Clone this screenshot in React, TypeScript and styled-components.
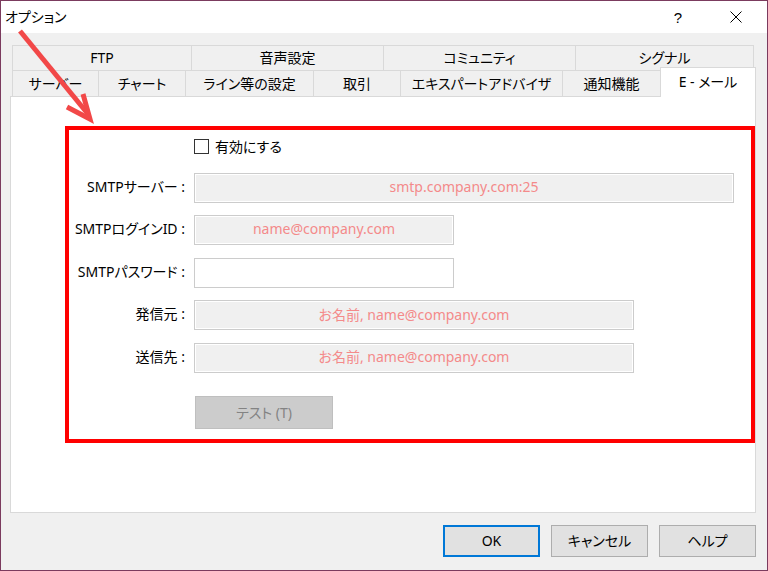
import React from "react";
import styled, { createGlobalStyle } from "styled-components";

const FONT = `"Noto Sans", "Noto Sans CJK JP", sans-serif`;

const GlobalStyle = createGlobalStyle`
  html, body { margin: 0; padding: 0; background: #ffffff; }
  * { box-sizing: border-box; }
`;

const Window = styled.div`
  position: relative;
  width: 768px;
  height: 571px;
  border: 1px solid #7b3b5e;
  background: #f0f0f0;
  display: flex;
  flex-direction: column;
  font-family: ${FONT};
  font-feature-settings: "palt";
  font-size: 14px;
  color: #000;
  overflow: hidden;
`;

const TitleBar = styled.div`
  height: 32px;
  background: #ffffff;
  display: flex;
  align-items: center;
  padding-left: 4px;
`;

const TitleText = styled.div`
  flex: 1;
  font-size: 14px;
  line-height: 1;
`;

const TitleControls = styled.div`
  display: flex;
  align-items: center;
  gap: 12px;
  padding-right: 8px;
`;

const TitleButton = styled.div`
  width: 46px;
  height: 32px;
  display: flex;
  align-items: center;
  justify-content: center;
  font-size: 15px;
  font-family: "Liberation Sans", sans-serif;
`;

const Body = styled.div`
  flex: 1;
  display: flex;
  flex-direction: column;
  padding: 12px 11px 0 9px;
`;

const TabStrip = styled.div`
  display: flex;
  flex-direction: column;
  margin-left: 2px;
`;

const TabRow = styled.div<{ $h: number }>`
  display: flex;
  height: ${(p) => p.$h}px;
`;

const Tab = styled.div<{ $w: number; $last?: boolean; $active?: boolean }>`
  width: ${(p) => p.$w}px;
  display: flex;
  align-items: center;
  justify-content: center;
  padding-bottom: 2px;
  border-top: 1px solid #d9d9d9;
  border-left: 1px solid #d9d9d9;
  border-right: ${(p) => (p.$last || p.$active ? "1px solid #d9d9d9" : "none")};
  background: ${(p) => (p.$active ? "#ffffff" : "#f0f0f0")};
  white-space: nowrap;
  ${(p) =>
    p.$active
      ? `
    align-self: flex-start;
    height: 30px;
    margin-top: -3px;
    position: relative;
    z-index: 1;
    padding-bottom: 3px;
  `
      : ""}
`;

const Panel = styled.div`
  height: 417px;
  border: 1px solid #d9d9d9;
  background: #ffffff;
  padding: 29px 0 0 54px;
`;

const Highlight = styled.div`
  height: 317px;
  border: 4px solid #ff0000;
  padding-top: 9px;
`;

const Form = styled.div`
  display: grid;
  grid-template-columns: 125px 1fr;
  row-gap: 12.5px;
  align-items: center;
`;

const Label = styled.div`
  text-align: right;
  padding-right: 9px;
  padding-bottom: 2px;
  white-space: nowrap;
  line-height: 1;
`;

const CheckRow = styled.label`
  grid-column: 2;
  display: flex;
  align-items: center;
  gap: 6px;
  height: 15px;
  margin-bottom: 6px;
  line-height: 1;
`;

const CheckBox = styled.span`
  width: 15px;
  height: 15px;
  border: 1px solid #333333;
  background: #ffffff;
`;

const Field = styled.div<{ $w: number; $disabled?: boolean }>`
  width: ${(p) => p.$w}px;
  height: 30px;
  border: 1px solid #cccccc;
  box-shadow: inset 0 0 0 1px #ffffff;
  background: ${(p) => (p.$disabled ? "#f0f0f0" : "#ffffff")};
  color: #f48a8a;
  display: flex;
  align-items: center;
  justify-content: center;
  padding-bottom: 3px;
  font-size: 14px;
  white-space: nowrap;
`;

const TestButton = styled.div`
  grid-column: 2;
  margin-top: 11px;
  margin-left: 1px;
  width: 138px;
  height: 33px;
  background: #cccccc;
  border: 1px solid #bfbfbf;
  color: #838383;
  display: flex;
  align-items: center;
  justify-content: center;
  padding-bottom: 2px;
`;

const ButtonRow = styled.div`
  display: flex;
  justify-content: flex-end;
  gap: 11px;
  margin-top: 12px;
`;

const DialogButton = styled.div<{ $default?: boolean }>`
  width: 97px;
  height: 32px;
  background: #e1e1e1;
  border: ${(p) => (p.$default ? "2px solid #0078d7" : "1px solid #adadad")};
  display: flex;
  align-items: center;
  justify-content: center;
  padding-bottom: 2px;
`;

const ArrowLayer = styled.svg`
  position: absolute;
  left: 0;
  top: 0;
  pointer-events: none;
`;

const row1 = [
  { t: "FTP", w: 179 },
  { t: "音声設定", w: 192 },
  { t: "コミュニティ", w: 192 },
  { t: "シグナル", w: 179 },
];

const row2 = [
  { t: "サーバー", w: 86 },
  { t: "チャート", w: 87 },
  { t: "ライン等の設定", w: 128 },
  { t: "取引", w: 87 },
  { t: "エキスパートアドバイザ", w: 162 },
  { t: "通知機能", w: 98 },
];

export default function App() {
  return (
    <>
      <GlobalStyle />
      <Window>
        <TitleBar>
          <TitleText>オプション</TitleText>
          <TitleControls>
            <TitleButton>?</TitleButton>
            <TitleButton>
              <svg width="12" height="12" viewBox="0 0 12 12">
                <path d="M0.5 0.5 L11.5 11.5 M11.5 0.5 L0.5 11.5" stroke="#000" strokeWidth="1" />
              </svg>
            </TitleButton>
          </TitleControls>
        </TitleBar>
        <Body>
          <TabStrip>
            <TabRow $h={25}>
              {row1.map((t, i) => (
                <Tab key={t.t} $w={t.w} $last={i === row1.length - 1}>
                  {t.t}
                </Tab>
              ))}
            </TabRow>
            <TabRow $h={26}>
              {row2.map((t) => (
                <Tab key={t.t} $w={t.w}>
                  {t.t}
                </Tab>
              ))}
              <Tab $w={96} $active>
                E - メール
              </Tab>
            </TabRow>
          </TabStrip>
          <Panel>
            <Highlight>
              <Form>
                <CheckRow>
                  <CheckBox />
                  有効にする
                </CheckRow>
                <Label>SMTPサーバー :</Label>
                <Field $w={540} $disabled>smtp.company.com:25</Field>
                <Label>SMTPログインID :</Label>
                <Field $w={260} $disabled>name@company.com</Field>
                <Label>SMTPパスワード :</Label>
                <Field $w={260} />
                <Label>発信元 :</Label>
                <Field $w={440} $disabled>お名前, name@company.com</Field>
                <Label>送信先 :</Label>
                <Field $w={440} $disabled>お名前, name@company.com</Field>
                <TestButton>テスト (T)</TestButton>
              </Form>
            </Highlight>
          </Panel>
          <ButtonRow>
            <DialogButton $default>OK</DialogButton>
            <DialogButton>キャンセル</DialogButton>
            <DialogButton>ヘルプ</DialogButton>
          </ButtonRow>
        </Body>
        <ArrowLayer width="766" height="569" viewBox="0 0 766 569">
          <g stroke="#f24848" strokeWidth="5" fill="none" strokeLinecap="butt" strokeLinejoin="miter">
            <line x1="19" y1="30" x2="87" y2="113" />
            <polyline points="66,106 89,118 82,93" />
          </g>
        </ArrowLayer>
      </Window>
    </>
  );
}
